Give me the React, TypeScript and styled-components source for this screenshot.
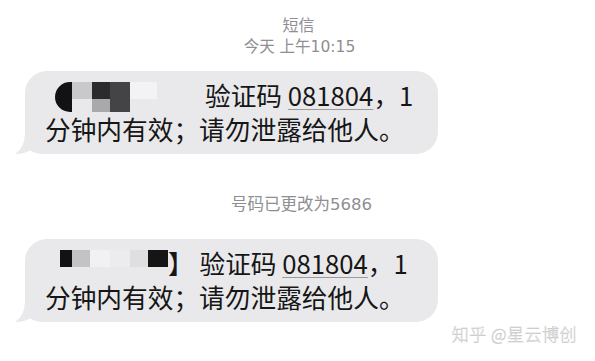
import React from 'react';
import styled, { createGlobalStyle } from 'styled-components';

const GlobalStyle = createGlobalStyle`
  html, body {
    margin: 0;
    padding: 0;
    background: #ffffff;
  }
  body {
    font-family: 'Noto Sans CJK SC', 'Noto Sans', sans-serif;
  }
`;

const Page = styled.div`
  width: 595px;
  height: 361px;
  overflow: hidden;
  display: flex;
  flex-direction: column;
  background: #fff;
`;

const Header = styled.div`
  padding-top: 15px;
  display: flex;
  flex-direction: column;
  align-items: center;
  color: #8e8e93;
  font-family: 'DejaVu Sans', 'Noto Sans CJK SC', sans-serif;
`;

const Title = styled.div`
  font-size: 16px;
  line-height: 21px;
  padding-left: 2px;
`;

const Stamp = styled.div`
  margin-top: 1px;
  font-size: 15.5px;
  line-height: 20px;
  padding-left: 4px;
`;

const Bubble = styled.div<{ $top: number }>`
  position: relative;
  margin: ${(p) => p.$top}px 0 0 25px;
  width: 413px;
  box-sizing: border-box;
  padding: 7px 0 8px 20px;
  background: #e9e9eb;
  border-radius: 22px;
  color: #161616;
  font-size: 25.7px;
  line-height: 34px;
  white-space: nowrap;
`;

const Tail = styled.svg`
  position: absolute;
  left: -10px;
  bottom: 0;
  width: 30px;
  height: 22px;
`;

const Code = styled.span`
  text-decoration: underline;
  text-decoration-color: #9a9a9a;
  text-decoration-thickness: 1px;
  text-underline-offset: 3px;
`;

const Mosaic = styled.span<{ $cols: string }>`
  display: inline-grid;
  vertical-align: top;
  grid-template-columns: ${(p) => p.$cols};
  grid-template-rows: 4px 17px 13px;
  height: 34px;
`;

const Cell = styled.span<{ $c: number; $s: number; $r: number; $rs: number; $bg: string; $round?: boolean }>`
  grid-column: ${(p) => p.$c} / span ${(p) => p.$s};
  grid-row: ${(p) => p.$r} / span ${(p) => p.$rs};
  background: ${(p) => p.$bg};
  border-radius: ${(p) => (p.$round ? '16px 0 0 16px' : '0')};
`;

const Notice = styled.div`
  margin-top: 40px;
  text-align: center;
  color: #8e8e93;
  font-family: 'DejaVu Sans', 'Noto Sans CJK SC', sans-serif;
  font-size: 16.5px;
  line-height: 21px;
  padding-left: 8px;
`;

const Watermark = styled.div`
  margin-top: 1px;
  align-self: flex-end;
  padding-right: 18px;
  font-size: 17px;
  line-height: 22px;
  font-weight: 300;
  color: #f5f5f5;
  -webkit-text-stroke: 0.45px #c6c6c6;
  letter-spacing: 0.5px;
`;

type CellData = { c: number; s?: number; r: number; rs?: number; bg: string; round?: boolean };

const firstCells: CellData[] = [
  { c: 2, r: 2, rs: 2, bg: '#121212', round: true },
  { c: 3, r: 2, bg: '#c9c9cb' },
  { c: 4, r: 2, bg: '#2b2b2d' },
  { c: 4, r: 3, bg: '#a9a9ab' },
  { c: 5, r: 2, rs: 2, bg: '#444446' },
  { c: 6, r: 2, bg: '#f3f3f5' },
];

const secondCells: CellData[] = [
  { c: 2, r: 2, bg: '#121212' },
  { c: 3, r: 2, bg: '#c3c3c5' },
  { c: 4, r: 2, bg: '#f1f1f3' },
  { c: 5, r: 2, bg: '#ececee' },
  { c: 6, r: 2, bg: '#dfdfe1' },
  { c: 7, r: 2, bg: '#151515' },
];

const Blur: React.FC<{ cols: string; cells: CellData[] }> = ({ cols, cells }) => (
  <Mosaic $cols={cols}>
    {cells.map((k, i) => (
      <Cell key={i} $c={k.c} $s={k.s ?? 1} $r={k.r} $rs={k.rs ?? 1} $bg={k.bg} $round={k.round} />
    ))}
  </Mosaic>
);

const BubbleTail = () => (
  <Tail viewBox="0 0 30 22">
    <path d="M10 0 C10 11 6 18 0 22 C6 22 11 21 15 18.5 C19 21 24 22 30 22 L30 0 Z" fill="#e9e9eb" />
  </Tail>
);

const Message: React.FC<{ top: number; children: React.ReactNode }> = ({ top, children }) => (
  <Bubble $top={top}>
    {children}
    验证码 <Code>081804</Code>，1
    <br />
    分钟内有效；请勿泄露给他人。
    <BubbleTail />
  </Bubble>
);

const App: React.FC = () => {
  return (
    <Page>
      <GlobalStyle />
      <Header>
        <Title>短信</Title>
        <Stamp>今天 上午10:15</Stamp>
      </Header>
      <Message top={14}>
        <Blur cols="10px 17px 20px 18px 20px 27px 48px" cells={firstCells} />
      </Message>
      <Notice>号码已更改为5686</Notice>
      <Message top={24}>
        <Blur cols="15px 12px 18px 20px 20px 18px 20px" cells={secondCells} />】{' '}
      </Message>
      <Watermark>知乎 @星云博创</Watermark>
    </Page>
  );
};

export default App;
